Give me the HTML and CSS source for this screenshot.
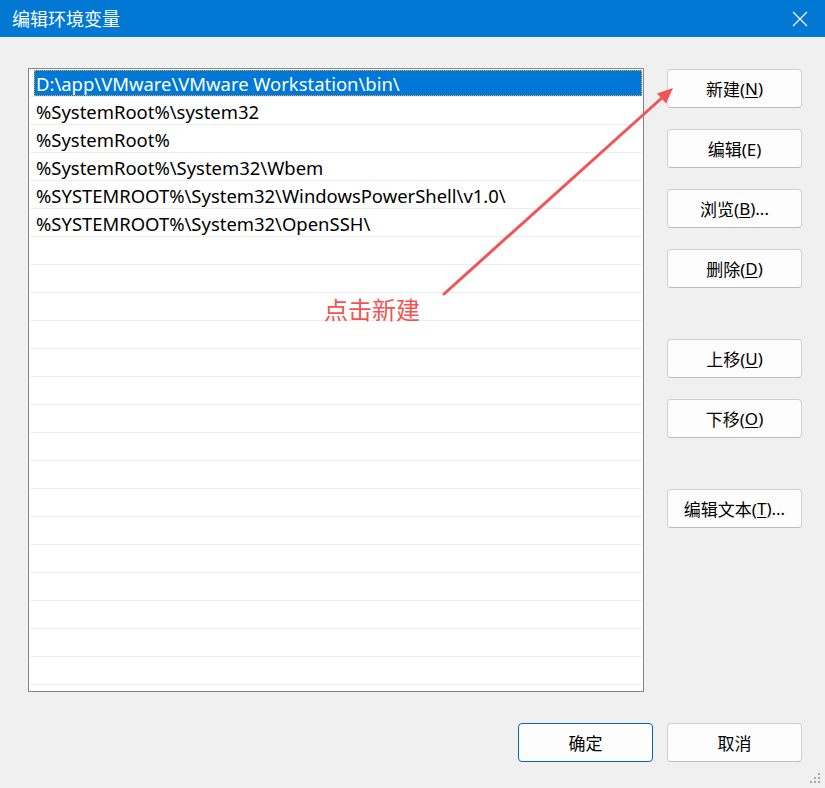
FILE: index.html
```html
<!DOCTYPE html>
<html lang="zh-CN">
<head>
<meta charset="utf-8">
<title>编辑环境变量</title>
<link rel="stylesheet" href="styles.css">
</head>
<body>
<div class="dialog">
  <header class="titlebar">
    <span class="title">编辑环境变量</span>
    <button class="close" aria-label="关闭">
      <svg width="16" height="16" viewBox="0 0 16 16"><path d="M1 1 L15 15 M15 1 L1 15" stroke="#fff" stroke-width="1.2" fill="none"/></svg>
    </button>
  </header>

  <main class="content">
    <div class="pathlist">
      <div class="row selected"><span class="cell">D:\app\VMware\VMware Workstation\bin\</span></div>
      <div class="row"><span class="cell">%SystemRoot%\system32</span></div>
      <div class="row"><span class="cell">%SystemRoot%</span></div>
      <div class="row"><span class="cell">%SystemRoot%\System32\Wbem</span></div>
      <div class="row"><span class="cell">%SYSTEMROOT%\System32\WindowsPowerShell\v1.0\</span></div>
      <div class="row"><span class="cell">%SYSTEMROOT%\System32\OpenSSH\</span></div>
      <div class="row"></div><div class="row"></div><div class="row"></div><div class="row"></div>
      <div class="row"></div><div class="row"></div><div class="row"></div><div class="row"></div>
      <div class="row"></div><div class="row"></div><div class="row"></div><div class="row"></div>
      <div class="row"></div><div class="row"></div><div class="row"></div><div class="row"></div>
      <div class="row"></div>
    </div>

    <div class="actions">
      <div class="group">
        <button class="btn">新建(<u>N</u>)</button>
        <button class="btn">编辑(E)</button>
        <button class="btn">浏览(<u>B</u>)...</button>
        <button class="btn">删除(<u>D</u>)</button>
      </div>
      <div class="group">
        <button class="btn">上移(<u>U</u>)</button>
        <button class="btn">下移(<u>O</u>)</button>
      </div>
      <div class="group">
        <button class="btn">编辑文本(<u>T</u>)...</button>
      </div>
    </div>
  </main>

  <footer class="footer">
    <button class="btn primary">确定</button>
    <button class="btn">取消</button>
  </footer>

  <div class="note">点击新建</div>
  <svg class="pointer" width="825" height="788" viewBox="0 0 825 788">
    <line x1="444" y1="294" x2="664" y2="96" stroke="#f25353" stroke-width="3" stroke-linecap="round"/>
    <polygon points="673,88 657,93.5 666,103.5" fill="#f25353"/>
  </svg>

  <svg class="grip" width="12" height="12" viewBox="0 0 12 12">
    <rect x="8" y="0" width="2" height="2" fill="#a8a8a8"/>
    <rect x="4" y="4" width="2" height="2" fill="#a8a8a8"/>
    <rect x="8" y="4" width="2" height="2" fill="#a8a8a8"/>
    <rect x="0" y="8" width="2" height="2" fill="#a8a8a8"/>
    <rect x="4" y="8" width="2" height="2" fill="#a8a8a8"/>
    <rect x="8" y="8" width="2" height="2" fill="#a8a8a8"/>
  </svg>
</div>
</body>
</html>
```

FILE: styles.css
```css
* { box-sizing: border-box; }

html, body {
  margin: 0;
  padding: 0;
  background: #f0f0f0;
}

.dialog {
  position: relative;
  width: 825px;
  height: 788px;
  overflow: hidden;
  background: #f0f0f0;
  font-family: "Noto Sans", "Noto Sans CJK SC", sans-serif;
  color: #000;
}

/* window caption */
.titlebar {
  height: 37px;
  background: #0078d4;
  display: flex;
  align-items: center;
  justify-content: space-between;
  padding: 0 17px 0 12px;
}

.title {
  color: #fff;
  font-family: "Noto Sans CJK SC", sans-serif;
  font-size: 18px;
  line-height: 1;
  margin-top: -2px;
}

.close {
  background: none;
  border: 0;
  padding: 0;
  width: 16px;
  height: 16px;
  display: flex;
}

/* list + side buttons */
.content {
  display: flex;
  padding: 31px 0 0 28px;
}

.pathlist {
  width: 616px;
  height: 624px;
  border: 1px solid #848484;
  background: #fff;
  overflow: hidden;
  padding: 0 1px 0 1px;
}

.row {
  height: 28px;
  border-bottom: 1px solid #ececec;
  padding: 1px 0 0 4px;
}

.cell {
  display: flex;
  align-items: center;
  height: 26px;
  padding-left: 1px;
  font-size: 18.45px;
  white-space: nowrap;
  border: 1px solid transparent;
}

.row.selected .cell {
  background: #0078d7;
  color: #fff;
  border: 1px dotted #f0a23a;
}

.actions {
  margin-left: 23px;
  padding-top: 1px;
  display: flex;
  flex-direction: column;
  gap: 51px;
}

.group {
  display: flex;
  flex-direction: column;
  gap: 21px;
}

.btn {
  width: 135px;
  height: 39px;
  background: #fdfdfd;
  border: 1px solid #d0d0d0;
  border-bottom-color: #bdbdbd;
  border-radius: 4px;
  font-family: "Noto Sans", "Noto Sans CJK SC", sans-serif;
  font-size: 17px;
  color: #000;
  padding: 0;
  display: flex;
  align-items: center;
  justify-content: center;
}

.btn u {
  text-underline-offset: 2px;
}

.btn.primary {
  border: 1px solid #0067c0;
}

/* dialog buttons */
.footer {
  display: flex;
  justify-content: flex-end;
  gap: 14px;
  padding: 31px 23px 0 0;
}

/* red annotation */
.note {
  position: absolute;
  left: 324px;
  top: 294px;
  font-family: "Noto Sans CJK SC", sans-serif;
  font-size: 24px;
  line-height: 30px;
  color: #f25353;
}

.pointer {
  position: absolute;
  left: 0;
  top: 0;
  pointer-events: none;
}

.grip {
  position: absolute;
  right: 3px;
  bottom: 3px;
}
```
